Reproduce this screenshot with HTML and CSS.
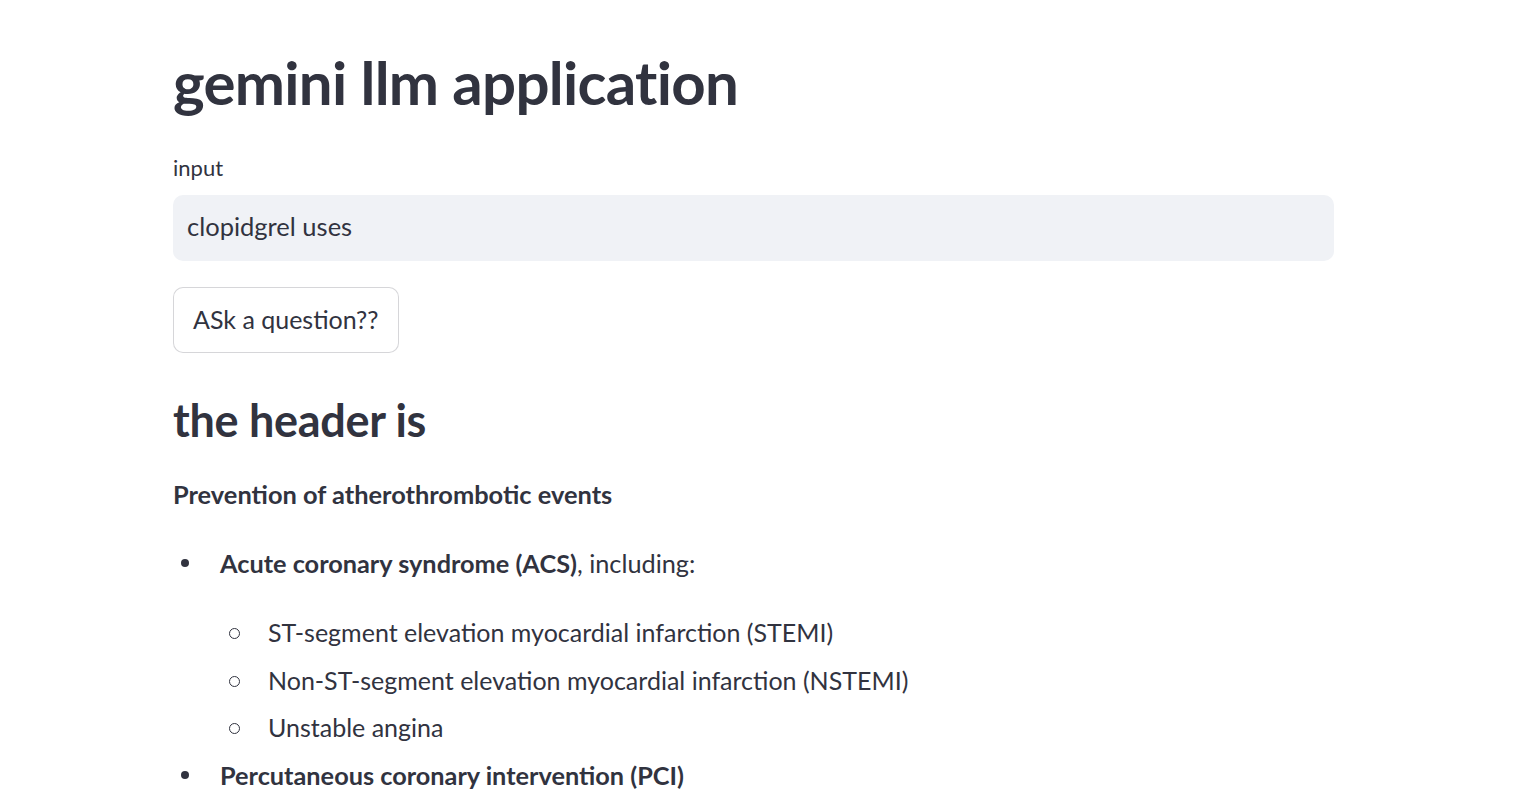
FILE: index.html
```html
<!DOCTYPE html>
<html lang="en">
<head>
<meta charset="utf-8">
<title>gemini llm application</title>
<link rel="stylesheet" href="styles.css">
</head>
<body>
<main class="app">
  <h1 class="title">gemini llm application</h1>
  <label class="label" for="q">input</label>
  <div class="field"><input id="q" class="field-input" type="text" value="clopidgrel uses"></div>
  <button class="btn" type="button">ASk a question??</button>
  <h2 class="header">the header is</h2>
  <p class="lead">Prevention of atherothrombotic events</p>
  <ul class="list">
    <li class="item">
      <span class="item-text"><strong>Acute coronary syndrome (ACS)</strong>, including:</span>
      <ul class="sublist">
        <li class="subitem"><span class="item-text">ST-segment elevation myocardial infarction (STEMI)</span></li>
        <li class="subitem"><span class="item-text">Non-ST-segment elevation myocardial infarction (NSTEMI)</span></li>
        <li class="subitem"><span class="item-text">Unstable angina</span></li>
      </ul>
    </li>
    <li class="item"><span class="item-text"><strong>Percutaneous coronary intervention (PCI)</strong></span></li>
  </ul>
</main>
</body>
</html>
```

FILE: styles.css
```css
* { box-sizing: border-box; }
html, body { margin: 0; padding: 0; background: #ffffff; }
body {
  font-family: "Lato", "Noto Sans", sans-serif;
  color: #31333f;
  overflow: hidden;
}
.app {
  padding: 44px 181px 0 173px;
  display: flex;
  flex-direction: column;
  align-items: flex-start;
}
.title {
  margin: 0;
  font-size: 60px;
  line-height: 76px;
  font-weight: 700;
  letter-spacing: -0.7px;
}
.label {
  margin-top: 35px;
  font-size: 22px;
  line-height: 26px;
}
.field {
  margin-top: 14px;
  width: 100%;
  height: 66px;
  background: #f0f2f6;
  border-radius: 10px;
  display: flex;
  align-items: center;
  padding-bottom: 4px;
}
.field-input {
  width: 100%;
  border: 0;
  outline: 0;
  background: transparent;
  padding: 0 14px;
  font-family: inherit;
  font-size: 25.5px;
  color: #31333f;
}
.btn {
  margin-top: 26px;
  height: 66px;
  padding: 0 19px 2px;
  background: #ffffff;
  border: 1px solid rgba(49, 51, 63, 0.2);
  border-radius: 10px;
  font-family: inherit;
  font-size: 25px;
  color: #31333f;
}
.header {
  margin: 37px 0 0;
  font-size: 45px;
  line-height: 60px;
  font-weight: 700;
  letter-spacing: -0.3px;
}
.lead {
  margin: 25px 0 0;
  font-size: 25.4px;
  line-height: 38px;
  font-weight: 700;
}
.list, .sublist {
  list-style: none;
  margin: 0;
  padding: 0;
}
.list { margin-top: 31px; width: 100%; }
.sublist { margin-top: 31px; grid-column: 2; }
.item, .subitem {
  display: grid;
  font-size: 25.3px;
  line-height: 38px;
  margin: 0 0 9.5px;
}
.subitem:last-child { margin-bottom: 0; }
.item { grid-template-columns: 47px 1fr; }
.subitem { grid-template-columns: 48px 1fr; font-size: 25px; }
.item::before {
  content: "";
  width: 8px;
  height: 8px;
  border-radius: 50%;
  background: #31333f;
  margin-left: 8px;
  align-self: start;
  margin-top: 15px;
}
.subitem::before {
  content: "";
  width: 9px;
  height: 9px;
  border-radius: 50%;
  border: 1.2px solid #31333f;
  margin-left: 9px;
  align-self: start;
  margin-top: 15px;
}
.item-text { grid-column: 2; }
strong { font-weight: 700; }
```
